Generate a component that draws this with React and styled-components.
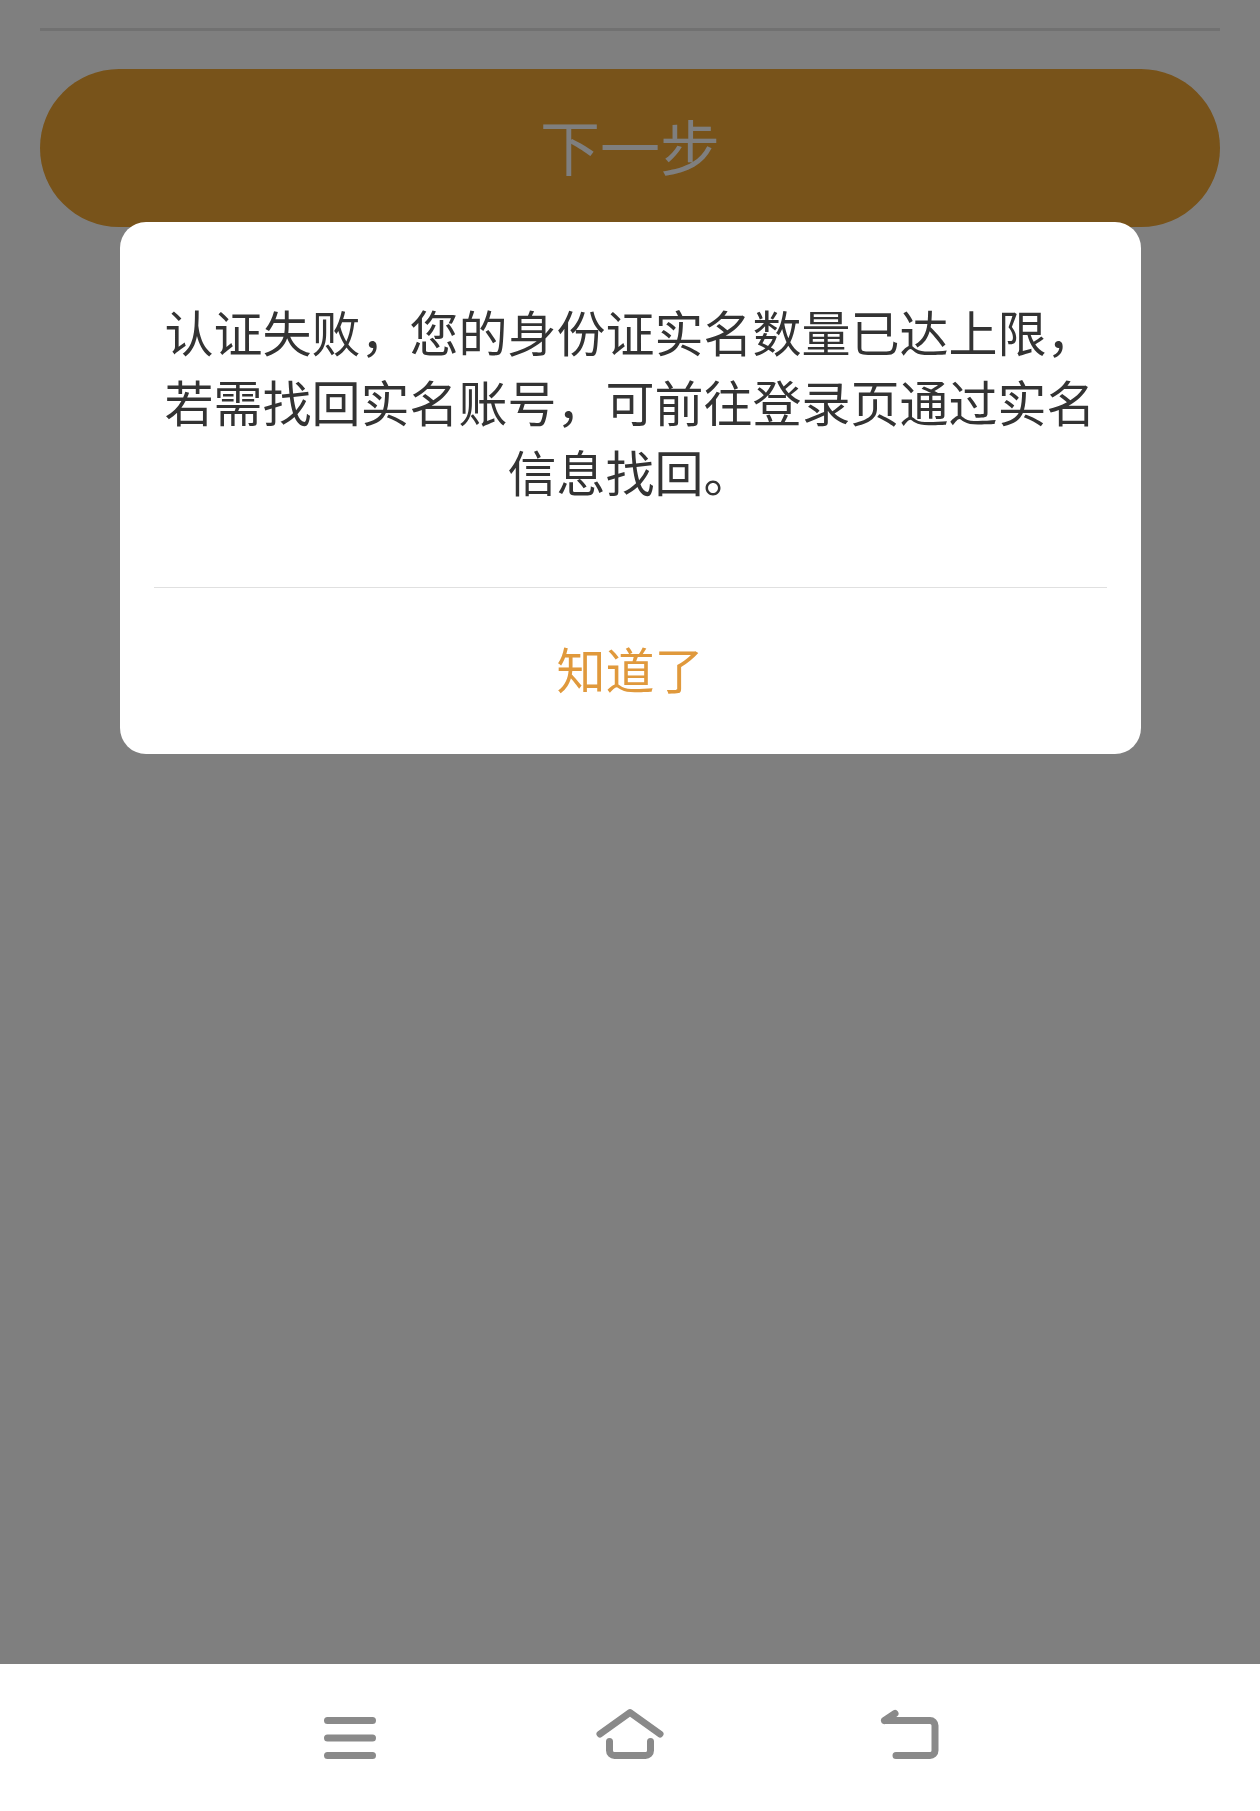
import React from "react";
import styled, { createGlobalStyle } from "styled-components";

const Global = createGlobalStyle`
  html, body { margin: 0; padding: 0; background: #fff; }
  body { font-family: "Noto Sans CJK SC", "Noto Sans", sans-serif; }
`;
const Page = styled.div`
  width: 1260px; height: 1811px; display: flex; flex-direction: column; overflow: hidden;
`;
const Screen = styled.main`
  position: relative; flex: 1; padding: 28px 40px 0; background: #fff;
`;
const Rule = styled.div`
  height: 3px; background: #e2e2e2; margin-bottom: 38px;
`;
const NextButton = styled.button`
  display: flex; align-items: center; justify-content: center; width: 100%; height: 158px;
  border: 0; border-radius: 79px; background: #f0a634; color: #fff;
  font: 400 60px "Noto Sans CJK SC", sans-serif; padding: 0 0 7px;
`;
const Overlay = styled.div`
  position: absolute; inset: 0; background: rgba(0,0,0,.5);
  display: flex; justify-content: center; align-items: flex-start; padding-top: 222px;
`;
const Dialog = styled.div`
  width: 1021px; background: #fff; border-radius: 26px; display: flex; flex-direction: column; align-items: stretch;
`;
const Message = styled.p`
  margin: 0; padding: 74px 34px 81px; text-align: center;
  font-size: 49px; line-height: 70px; color: #333;
`;
const Divider = styled.div`
  height: 1px; margin: 0 34px; background: #e0e0e0;
`;
const Confirm = styled.button`
  height: 166px; border: 0; background: transparent; color: #e0993c; padding: 0 0 7px;
  font: 400 49px "Noto Sans CJK SC", sans-serif;
`;
const NavBar = styled.nav`
  height: 147px; background: #fff; display: flex; justify-content: center; align-items: flex-start;
  padding-top: 42px; box-sizing: border-box; gap: 214px;
`;
const NavIcon = styled.svg`
  display: block; fill: none; stroke: #8a8a8a; stroke-width: 7; stroke-linecap: round; stroke-linejoin: round;
`;

export default function App() {
  return (
    <Page>
      <Global />
      <Screen>
        <Rule />
        <NextButton>下一步</NextButton>
        <Overlay>
          <Dialog>
            <Message>认证失败，您的身份证实名数量已达上限，若需找回实名账号，可前往登录页通过实名信息找回。</Message>
            <Divider />
            <Confirm>知道了</Confirm>
          </Dialog>
        </Overlay>
      </Screen>
      <NavBar>
        <NavIcon width="60" height="60" viewBox="0 0 60 60">
          <path d="M7.5 14.500h45M7.500 32h45M7.500 49.500h45" />
        </NavIcon>
        <NavIcon width="72" height="60" viewBox="0 0 72 60">
          <path d="M6 28L36 6.500 66 28M15.500 35.500v9a5 5 0 0 0 5 5h31a5 5 0 0 0 5-5v-9" />
        </NavIcon>
        <NavIcon width="60" height="60" viewBox="0 0 60 60">
          <path d="M4.500 14.500H50a5 5 0 0 1 5 5v25a5 5 0 0 1-5 5H16M4.500 14.500L15 7.500" />
        </NavIcon>
      </NavBar>
    </Page>
  );
}
